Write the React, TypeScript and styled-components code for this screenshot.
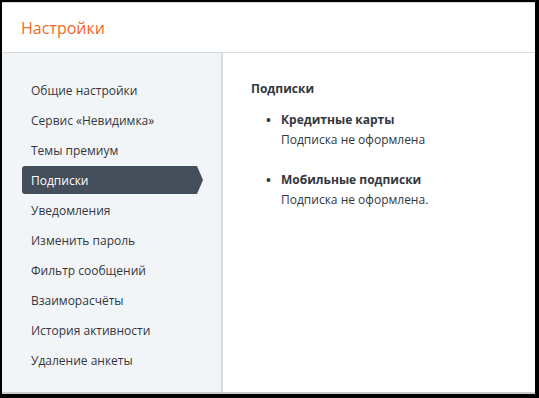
import React from "react";
import styled, { createGlobalStyle } from "styled-components";

const GlobalStyle = createGlobalStyle`
  html, body {
    margin: 0;
    padding: 0;
    background: #000;
  }
  body {
    font-family: "Open Sans", "Noto Sans", "DejaVu Sans", sans-serif;
  }
`;

const Frame = styled.div`
  width: 539px;
  height: 398px;
  box-sizing: border-box;
  padding: 2px 4px 4px 2px;
  background: #000;
`;

const Window = styled.div`
  height: 100%;
  background: #fff;
  border-top: 1px solid #d6d9dd;
  border-bottom: 2px solid #c9cdd2;
  box-sizing: border-box;
  display: flex;
  flex-direction: column;
`;

const Header = styled.div`
  height: 49px;
  flex: none;
  display: flex;
  align-items: center;
  padding-left: 19px;
  border-bottom: 1px solid #d6d9dd;
`;

const Title = styled.h1`
  margin: 0;
  font-size: 16px;
  font-weight: 400;
  color: #f0692b;
`;

const Body = styled.div`
  flex: 1;
  display: flex;
  min-height: 0;
`;

const Sidebar = styled.nav`
  width: 219px;
  flex: none;
  background: #f2f5f8;
  border-right: 2px solid #d9dde2;
  padding-top: 22px;
  display: flex;
  flex-direction: column;
`;

const MenuItem = styled.div<{ $active?: boolean }>`
  position: relative;
  height: 28px;
  margin: 1px 24px 1px 20px;
  padding-left: 9px;
  display: flex;
  align-items: center;
  font-size: 12px;
  color: ${(p) => (p.$active ? "#ffffff" : "#33373d")};
  background: ${(p) => (p.$active ? "#454f5c" : "transparent")};
  border-radius: 3px 0 0 3px;

  ${(p) =>
    p.$active &&
    `
    &::after {
      content: "";
      position: absolute;
      right: -6px;
      top: 0;
      width: 0;
      height: 0;
      border-top: 14px solid transparent;
      border-bottom: 14px solid transparent;
      border-left: 6px solid #454f5c;
    }
  `}
`;

const Content = styled.main`
  flex: 1;
  padding: 27px 28px;
  color: #33373d;
`;

const Heading = styled.div`
  font-size: 12px;
  font-weight: 700;
  color: #33373d;
  margin-bottom: 13px;
`;

const List = styled.ul`
  margin: 0;
  padding: 0 0 0 30px;
  list-style: none;
`;

const Item = styled.li`
  position: relative;
  margin-bottom: 20px;
  line-height: 20px;

  &::before {
    content: "•";
    position: absolute;
    left: -15px;
    top: 0;
    font-size: 13px;
    font-weight: 700;
  }
`;

const ItemTitle = styled.div`
  font-size: 12px;
  font-weight: 700;
  color: #33373d;
`;

const ItemText = styled.div`
  font-size: 12px;
  color: #33373d;
`;

const menu = [
  "Общие настройки",
  "Сервис «Невидимка»",
  "Темы премиум",
  "Подписки",
  "Уведомления",
  "Изменить пароль",
  "Фильтр сообщений",
  "Взаиморасчёты",
  "История активности",
  "Удаление анкеты",
];

const subs = [
  { title: "Кредитные карты", text: "Подписка не оформлена" },
  { title: "Мобильные подписки", text: "Подписка не оформлена." },
];

export default function App() {
  return (
    <>
      <GlobalStyle />
      <Frame>
        <Window>
          <Header>
            <Title>Настройки</Title>
          </Header>
          <Body>
            <Sidebar>
              {menu.map((m) => (
                <MenuItem key={m} $active={m === "Подписки"}>
                  {m}
                </MenuItem>
              ))}
            </Sidebar>
            <Content>
              <Heading>Подписки</Heading>
              <List>
                {subs.map((s) => (
                  <Item key={s.title}>
                    <ItemTitle>{s.title}</ItemTitle>
                    <ItemText>{s.text}</ItemText>
                  </Item>
                ))}
              </List>
            </Content>
          </Body>
        </Window>
      </Frame>
    </>
  );
}
